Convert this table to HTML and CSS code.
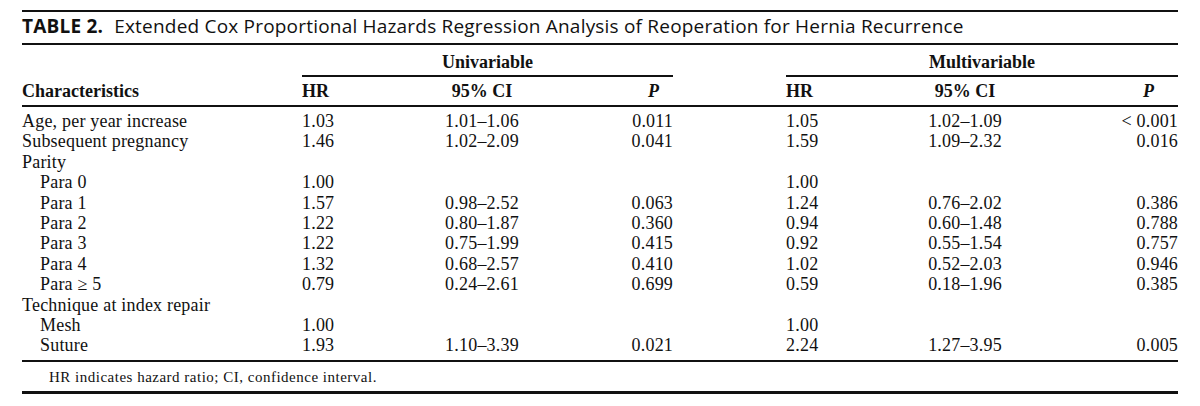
FILE: index.html
```html
<!DOCTYPE html>
<html lang="en">
<head>
<meta charset="utf-8">
<title>Table 2</title>
<link rel="stylesheet" href="styles.css">
</head>
<body>
<div class="sheet">
  <div class="title"><span class="label">TABLE 2.</span> Extended Cox Proportional Hazards Regression Analysis of Reoperation for Hernia Recurrence</div>
  <table class="data">
    <colgroup>
      <col class="w-char">
      <col class="w-hr">
      <col class="w-ci">
      <col class="w-p">
      <col class="w-gap">
      <col class="w-hr">
      <col class="w-ci2">
      <col class="w-p2">
    </colgroup>
    <thead>
      <tr class="group">
        <th></th>
        <th colspan="3" class="span">Univariable</th>
        <th></th>
        <th colspan="3" class="span">Multivariable</th>
      </tr>
      <tr class="cols">
        <th class="char">Characteristics</th>
        <th class="hr">HR</th>
        <th class="ci">95% CI</th>
        <th class="p"><i>P</i></th>
        <th class="gap"></th>
        <th class="hr">HR</th>
        <th class="ci">95% CI</th>
        <th class="p p2"><i>P</i></th>
      </tr>
    </thead>
    <tbody>
      <tr><td class="char">Age, per year increase</td><td class="hr">1.03</td><td class="ci">1.01–1.06</td><td class="p">0.011</td><td></td><td class="hr">1.05</td><td class="ci">1.02–1.09</td><td class="p">&lt; 0.001</td></tr>
      <tr><td class="char">Subsequent pregnancy</td><td class="hr">1.46</td><td class="ci">1.02–2.09</td><td class="p">0.041</td><td></td><td class="hr">1.59</td><td class="ci">1.09–2.32</td><td class="p">0.016</td></tr>
      <tr><td class="char">Parity</td><td></td><td></td><td></td><td></td><td></td><td></td><td></td></tr>
      <tr><td class="char ind">Para 0</td><td class="hr">1.00</td><td></td><td></td><td></td><td class="hr">1.00</td><td></td><td></td></tr>
      <tr><td class="char ind">Para 1</td><td class="hr">1.57</td><td class="ci">0.98–2.52</td><td class="p">0.063</td><td></td><td class="hr">1.24</td><td class="ci">0.76–2.02</td><td class="p">0.386</td></tr>
      <tr><td class="char ind">Para 2</td><td class="hr">1.22</td><td class="ci">0.80–1.87</td><td class="p">0.360</td><td></td><td class="hr">0.94</td><td class="ci">0.60–1.48</td><td class="p">0.788</td></tr>
      <tr><td class="char ind">Para 3</td><td class="hr">1.22</td><td class="ci">0.75–1.99</td><td class="p">0.415</td><td></td><td class="hr">0.92</td><td class="ci">0.55–1.54</td><td class="p">0.757</td></tr>
      <tr><td class="char ind">Para 4</td><td class="hr">1.32</td><td class="ci">0.68–2.57</td><td class="p">0.410</td><td></td><td class="hr">1.02</td><td class="ci">0.52–2.03</td><td class="p">0.946</td></tr>
      <tr><td class="char ind">Para ≥ 5</td><td class="hr">0.79</td><td class="ci">0.24–2.61</td><td class="p">0.699</td><td></td><td class="hr">0.59</td><td class="ci">0.18–1.96</td><td class="p">0.385</td></tr>
      <tr><td class="char">Technique at index repair</td><td></td><td></td><td></td><td></td><td></td><td></td><td></td></tr>
      <tr><td class="char ind">Mesh</td><td class="hr">1.00</td><td></td><td></td><td></td><td class="hr">1.00</td><td></td><td></td></tr>
      <tr><td class="char ind">Suture</td><td class="hr">1.93</td><td class="ci">1.10–3.39</td><td class="p">0.021</td><td></td><td class="hr">2.24</td><td class="ci">1.27–3.95</td><td class="p">0.005</td></tr>
    </tbody>
  </table>
  <div class="note">HR indicates hazard ratio; CI, confidence interval.</div>
</div>
</body>
</html>
```

FILE: styles.css
```css
html, body {
  margin: 0;
  padding: 0;
  background: #ffffff;
  color: #111111;
}

.sheet {
  width: 1156px;
  margin-left: 22px;
  padding-top: 10px;
}

.title {
  font-family: "Open Sans", "Noto Sans", sans-serif;
  font-size: 19px;
  letter-spacing: 0.2px;
  line-height: 29px;
  padding-bottom: 2px;
  border-top: 2px solid #111;
  border-bottom: 2px solid #111;
  white-space: nowrap;
}

.title .label {
  font-weight: 700;
  margin-right: 6px;
}

.data {
  width: 1156px;
  table-layout: fixed;
  border-collapse: separate;
  border-spacing: 0;
  font-family: "Liberation Serif", "Times New Roman", serif;
  font-size: 18px;
  letter-spacing: 0.2px;
}

.w-char { width: 280px; }
.w-hr { width: 120px; }
.w-ci { width: 120px; }
.w-p { width: 131px; }
.w-gap { width: 113px; }
.w-ci2 { width: 118px; }
.w-p2 { width: 154px; }

.data th {
  font-weight: 700;
  letter-spacing: 0;
  line-height: 20px;
  padding: 0;
  white-space: nowrap;
}

.group th {
  padding-top: 7px;
  padding-bottom: 3px;
}

.group th.span {
  text-align: center;
  border-bottom: 2px solid #111;
}

.cols th {
  padding-top: 4px;
  padding-bottom: 4px;
  border-bottom: 2px solid #111;
}

.data td {
  padding: 0;
  line-height: 20.4px;
  white-space: nowrap;
}

tbody tr:first-child td { padding-top: 4px; }
tbody tr:last-child td { padding-bottom: 4px; }

.char { text-align: left; }
.ind { padding-left: 18px !important; }
.hr { text-align: left; }
.ci { text-align: center; }
.p { text-align: right; }
th.p { padding-right: 14px; }
th.p2 { padding-right: 24px; }

.note {
  font-family: "Liberation Serif", "Times New Roman", serif;
  font-size: 15px;
  letter-spacing: 0.5px;
  line-height: 20px;
  padding: 5px 0 4px 27px;
  border-top: 2px solid #111;
  border-bottom: 3px solid #111;
}
```
